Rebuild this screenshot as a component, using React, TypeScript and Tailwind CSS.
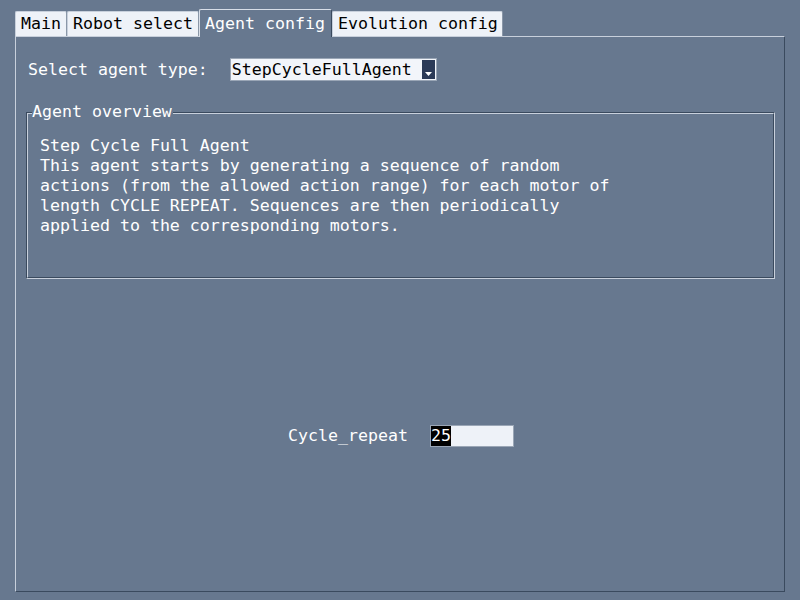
import React from "react";

const font = { fontFamily: '"DejaVu Sans Mono", "Liberation Mono", monospace' };

function Tab({ label, width, selected }: { label: string; width: string; selected?: boolean }) {
  if (selected) {
    return (
      <div
        className={`${width} relative z-10 -mb-px flex h-[28px] items-center rounded-tl-[2px] rounded-tr-[2px] border-l border-t border-r border-l-[#d8dee8] border-t-[#d8dee8] border-r-[#3a4a5e] bg-[#67788f] pl-[5px] text-white`}
      >
        {label}
      </div>
    );
  }
  return (
    <div
      className={`${width} flex h-[25px] items-center rounded-tl-[2px] rounded-tr-[2px] border-l border-t border-r border-l-[#c8d0dc] border-t-[#c8d0dc] border-r-[#8a97a8] bg-[#eef2f8] pl-[5px] text-black`}
    >
      {label}
    </div>
  );
}

export default function App() {
  return (
    <div
      className="flex h-[600px] w-[800px] flex-col bg-[#67788f] pl-[15px] pr-[15px] pt-[8px] pb-[8px] text-[16.6px] leading-[20px]"
      style={font}
    >
      <div className="flex h-[28px] items-end">
        <Tab label="Main" width="w-[52px]" />
        <Tab label="Robot select" width="w-[132px]" />
        <Tab label="Agent config" width="w-[133px]" selected />
        <Tab label="Evolution config" width="w-[171px]" />
      </div>
      <div className="flex flex-1 flex-col border-l border-t border-r border-b border-l-[#c8d0dc] border-t-[#c8d0dc] border-r-[#3a4a5e] border-b-[#3a4a5e]">
        <div className="mt-[21px] flex h-[23px] items-center pl-[12px]">
          <span className="text-white">Select agent type:</span>
          <div className="ml-[22px] flex h-[23px] w-[207px] items-center border border-[#9aa6b6] bg-[#f2f5fa] pl-[1px] text-black">
            <span className="flex-1">StepCycleFullAgent</span>
            <div className="mr-[1px] flex h-[19px] w-[13px] items-end justify-center bg-[#2b3a57] pb-[3px]">
              <svg width="7" height="4" viewBox="0 0 7 4">
                <path d="M0 0 H7 L3.5 4 Z" fill="#ffffff" />
              </svg>
            </div>
          </div>
        </div>
        <div className="relative ml-[10px] mr-[9px] mt-[31px] h-[167px] border-l border-t border-r border-b border-l-[#3a4a5e] border-t-[#3a4a5e] border-r-[#c8d0dc] border-b-[#c8d0dc]">
          <div className="h-full border-l border-t border-r border-b border-l-[#c8d0dc] border-t-[#c8d0dc] border-r-[#3a4a5e] border-b-[#3a4a5e] pl-[12px] pt-[22px] text-white">
            <div>Step Cycle Full Agent</div>
            <div>This agent starts by generating a sequence of random</div>
            <div>actions (from the allowed action range) for each motor of</div>
            <div>length CYCLE REPEAT. Sequences are then periodically</div>
            <div>applied to the corresponding motors.</div>
          </div>
          <div className="absolute left-[5px] top-[-11px] bg-[#67788f] pr-[1px] leading-[20px] text-white">
            Agent overview
          </div>
        </div>
        <div className="flex flex-1 items-center justify-center pl-[2px] pt-[1px]">
          <span className="text-white">Cycle_repeat</span>
          <div className="ml-[22px] flex h-[22px] w-[84px] items-center border border-[#9aa6b6] bg-[#eef2f8]">
            <span className="bg-black leading-[20px] text-white">25</span>
          </div>
        </div>
      </div>
    </div>
  );
}
